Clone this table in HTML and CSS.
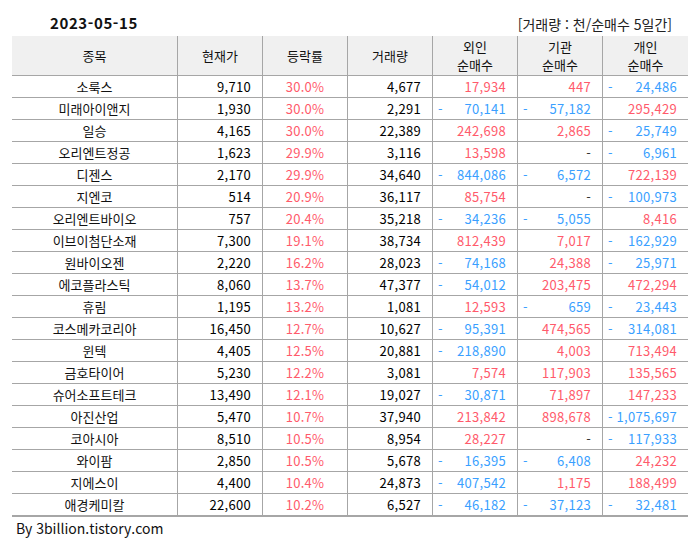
FILE: index.html
```html
<!DOCTYPE html>
<html lang="ko">
<head>
<meta charset="utf-8">
<title>2023-05-15 상승 종목</title>
<link rel="stylesheet" href="styles.css">
</head>
<body>
<div class="sheet">
  <div class="caption">
    <span class="date">2023-05-15</span>
    <span class="unit">[거래량 : 천/순매수 5일간]</span>
  </div>
  <div class="grid" role="table">
    <div class="row" role="row">
      <div class="hd">종목</div>
      <div class="hd">현재가</div>
      <div class="hd">등락률</div>
      <div class="hd">거래량</div>
      <div class="hd">외인<br>순매수</div>
      <div class="hd">기관<br>순매수</div>
      <div class="hd">개인<br>순매수</div>
    </div>
  </div>
  <div class="grid body" role="table" id="body"></div>
  <div class="footer">By 3billion.tistory.com</div>
</div>
<script src="app.js"></script>
</body>
</html>
```
FILE: styles.css
```css
body {
  margin: 0;
  background: #fff;
  color: #000;
  font-family: "Noto Sans CJK KR", "Noto Sans", sans-serif;
}
.sheet {
  width: 676px;
  margin-left: 12px;
}
.caption {
  height: 36px;
  display: flex;
  justify-content: space-between;
  align-items: flex-end;
}
.date {
  margin-left: 38px;
  font-size: 15px;
  font-weight: 600;
  letter-spacing: 0.6px;
  line-height: 20px;
  padding-bottom: 3px;
  color: #111;
}
.unit {
  margin-right: 16px;
  font-size: 14px;
  line-height: 20px;
  padding-bottom: 2px;
  color: #222;
}
.grid {
  display: grid;
  grid-template-columns: 165px 84px 84px 84px 84px 84px 85px;
  column-gap: 1px;
  row-gap: 1px;
  background: #a6a6a6;
}
.grid:first-of-type {
  border-top: 2px solid #a6a6a6;
}
.body {
  border-top: 1px solid #a6a6a6;
  border-bottom: 2px solid #a6a6a6;
}
.row {
  display: contents;
}
.hd {
  height: 39px;
  background: #f0f0f0;
  display: flex;
  align-items: center;
  justify-content: center;
  text-align: center;
  font-size: 13px;
  line-height: 18px;
  color: #111;
}
.c {
  height: 21px;
  background: #fff;
  display: flex;
  align-items: center;
  justify-content: space-between;
  font-size: 13px;
  line-height: 21px;
  padding: 0 11px 0 5px;
  white-space: nowrap;
  letter-spacing: 0.3px;
}
.name {
  justify-content: center;
  padding: 0;
  letter-spacing: 0;
  color: #111;
}
.rate {
  justify-content: center;
  padding: 0;
}
.num {
  justify-content: flex-end;
}
.up { color: #ff5a6b; }
.down { color: #3a9fff; }
.zero { color: #333; justify-content: flex-end; }
.footer {
  padding-left: 4px;
  font-size: 14px;
  line-height: 22px;
  color: #111;
}
```
FILE: app.js
```js
const rows = [
  ["소룩스","9,710","30.0%","4,677",17934,447,-24486],
  ["미래아이앤지","1,930","30.0%","2,291",-70141,-57182,295429],
  ["일승","4,165","30.0%","22,389",242698,2865,-25749],
  ["오리엔트정공","1,623","29.9%","3,116",13598,0,-6961],
  ["디젠스","2,170","29.9%","34,640",-844086,-6572,722139],
  ["지엔코","514","20.9%","36,117",85754,0,-100973],
  ["오리엔트바이오","757","20.4%","35,218",-34236,-5055,8416],
  ["이브이첨단소재","7,300","19.1%","38,734",812439,7017,-162929],
  ["원바이오젠","2,220","16.2%","28,023",-74168,24388,-25971],
  ["에코플라스틱","8,060","13.7%","47,377",-54012,203475,472294],
  ["휴림","1,195","13.2%","1,081",12593,-659,-23443],
  ["코스메카코리아","16,450","12.7%","10,627",-95391,474565,-314081],
  ["윈텍","4,405","12.5%","20,881",-218890,4003,713494],
  ["금호타이어","5,230","12.2%","3,081",7574,117903,135565],
  ["슈어소프트테크","13,490","12.1%","19,027",-30871,71897,147233],
  ["아진산업","5,470","10.7%","37,940",213842,898678,-1075697],
  ["코아시아","8,510","10.5%","8,954",28227,0,-117933],
  ["와이팜","2,850","10.5%","5,678",-16395,-6408,24232],
  ["지에스이","4,400","10.4%","24,873",-407542,1175,188499],
  ["애경케미칼","22,600","10.2%","6,527",-46182,-37123,-32481]
];
const body = document.getElementById("body");
function cell(cls, html) {
  const d = document.createElement("div");
  d.className = "c " + cls;
  d.innerHTML = html;
  return d;
}
function flow(v) {
  if (v === 0) return cell("zero", "<span>-</span>");
  const s = Math.abs(v).toLocaleString("en-US");
  if (v < 0) return cell("down", "<span>-</span><span>" + s + "</span>");
  return cell("up num", "<span>" + s + "</span>");
}
rows.forEach(r => {
  const row = document.createElement("div");
  row.className = "row";
  row.setAttribute("role", "row");
  row.appendChild(cell("name", r[0]));
  row.appendChild(cell("num", r[1]));
  row.appendChild(cell("rate up", r[2]));
  row.appendChild(cell("num", r[3]));
  row.appendChild(flow(r[4]));
  row.appendChild(flow(r[5]));
  row.appendChild(flow(r[6]));
  body.appendChild(row);
});
```
